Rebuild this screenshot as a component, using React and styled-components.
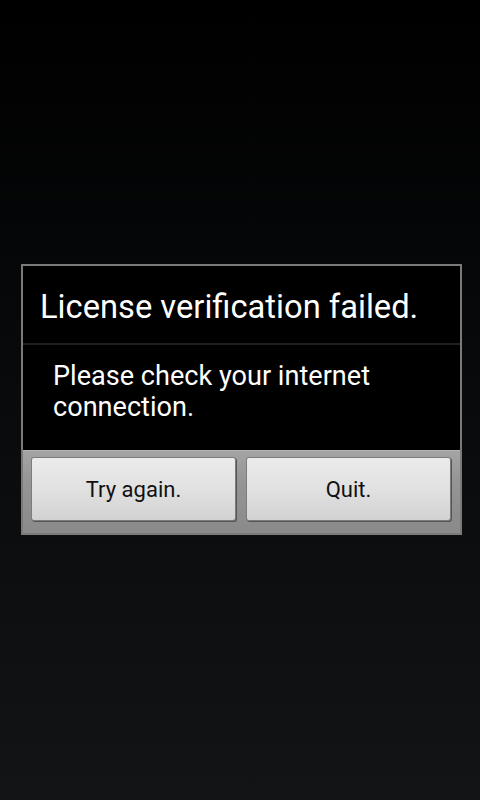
import React from "react";
import styled, { createGlobalStyle } from "styled-components";

const Global = createGlobalStyle`
  html, body { margin: 0; padding: 0; }
  body { background: #000; font-family: Roboto, "Noto Sans", sans-serif; }
`;

const Screen = styled.div`
  width: 480px;
  height: 800px;
  background: linear-gradient(180deg, #000 0%, #050607 30%, #0d0e10 70%, #121416 100%);
  display: flex;
  flex-direction: column;
  padding-top: 264px;
  box-sizing: border-box;
`;

const Dialog = styled.div`
  margin-left: 21px;
  width: 441px;
  box-sizing: border-box;
  border: 2px solid #7a7a7a;
  background: #000;
  display: flex;
  flex-direction: column;
`;

const Title = styled.div`
  height: 77px;
  box-sizing: border-box;
  padding-left: 17px;
  display: flex;
  align-items: center;
  color: #fff;
  font-size: 32.7px;
  padding-top: 5px;
`;

const Divider = styled.div`
  height: 2px;
  background: #1f1f1f;
`;

const Body = styled.div`
  height: 105px;
  box-sizing: border-box;
  padding: 16px 20px 0 30px;
  color: #fff;
  font-size: 27.1px;
  line-height: 31px;
`;

const ButtonPanel = styled.div`
  background: linear-gradient(180deg, #a4a4a4 0%, #949494 40%, #8a8a8a 100%);
  border-top: 1px solid #b4b4b4;
  padding: 7px 10px 13px 9px;
  display: flex;
  gap: 12px;
`;

const Button = styled.button`
  flex: 1;
  height: 62px;
  border: none;
  border-radius: 2px;
  background: linear-gradient(180deg, #ebebeb 0%, #e1e1e1 50%, #d2d2d2 100%);
  box-shadow: 0 0 0 1px #7c7c7c, 1px 1px 0 1px #555;
  color: #111;
  font-family: Roboto, "Noto Sans", sans-serif;
  font-size: 22px;
  padding: 0;
  cursor: pointer;
`;

export default function App() {
  return (
    <>
      <Global />
      <Screen>
        <Dialog>
          <Title>License verification failed.</Title>
          <Divider />
          <Body>Please check your internet connection.</Body>
          <ButtonPanel>
            <Button>Try again.</Button>
            <Button>Quit.</Button>
          </ButtonPanel>
        </Dialog>
      </Screen>
    </>
  );
}
